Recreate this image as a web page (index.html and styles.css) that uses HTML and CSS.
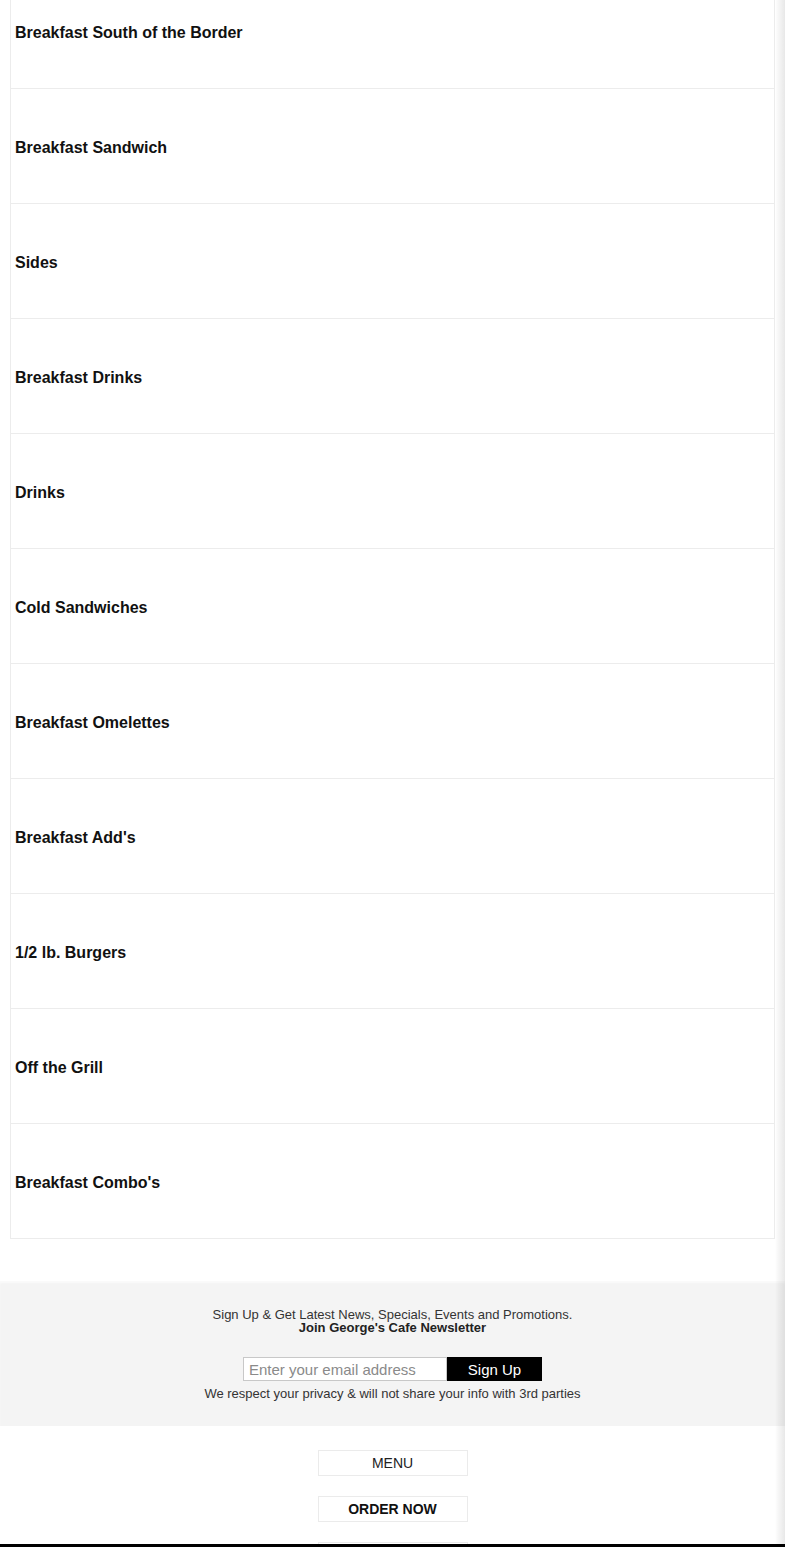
FILE: index.html
```html
<!DOCTYPE html>
<html lang="en">
<head>
<meta charset="utf-8">
<title>George's Cafe Menu</title>
<link rel="stylesheet" href="styles.css">
</head>
<body>
<main class="menu-list">
  <div class="menu-card"><h3>Breakfast South of the Border</h3></div>
  <div class="menu-card"><h3>Breakfast Sandwich</h3></div>
  <div class="menu-card"><h3>Sides</h3></div>
  <div class="menu-card"><h3>Breakfast Drinks</h3></div>
  <div class="menu-card"><h3>Drinks</h3></div>
  <div class="menu-card"><h3>Cold Sandwiches</h3></div>
  <div class="menu-card"><h3>Breakfast Omelettes</h3></div>
  <div class="menu-card"><h3>Breakfast Add's</h3></div>
  <div class="menu-card"><h3>1/2 lb. Burgers</h3></div>
  <div class="menu-card"><h3>Off the Grill</h3></div>
  <div class="menu-card"><h3>Breakfast Combo's</h3></div>
</main>

<section class="newsletter">
  <p class="lead">Sign Up &amp; Get Latest News, Specials, Events and Promotions.<br><strong>Join George's Cafe Newsletter</strong></p>
  <form class="signup">
    <input type="email" placeholder="Enter your email address">
    <button type="button">Sign Up</button>
  </form>
  <p class="privacy">We respect your privacy &amp; will not share your info with 3rd parties</p>
</section>

<nav class="footer-nav">
  <a class="nav-btn" href="#">MENU</a>
  <a class="nav-btn bold" href="#">ORDER NOW</a>
  <a class="nav-btn" href="#">&nbsp;</a>
</nav>
<div class="bottom-bar"></div>
<div class="edge-shadow"></div>
</body>
</html>
```

FILE: styles.css
```css
html, body {
  margin: 0;
  padding: 0;
  background: #fff;
  font-family: "Liberation Sans", Arial, sans-serif;
  color: #111;
}

body {
  height: 1547px;
  overflow: hidden;
  position: relative;
}

.menu-list {
  margin-top: -26px;
  padding: 0 10px;
}

.menu-card {
  box-sizing: border-box;
  height: 115px;
  border: 1px solid #ececec;
  border-top: none;
  display: flex;
  align-items: center;
  padding: 4px 4px 0;
}

.menu-card h3 {
  margin: 0;
  font-size: 16px;
  font-weight: bold;
  color: #111;
}

.newsletter {
  margin-top: 42px;
  background: #f4f4f4;
  padding: 27px 0 24px;
  text-align: center;
  font-size: 13px;
  color: #333;
  box-shadow: inset 0 2px 2px rgba(255,255,255,0.6);
}

.newsletter .lead {
  margin: 0;
  line-height: 13px;
}

.newsletter .lead strong {
  color: #222;
}

.signup {
  margin-top: 23px;
  display: flex;
  justify-content: center;
}

.signup input {
  box-sizing: border-box;
  width: 204px;
  height: 24px;
  margin: 0;
  border: 1px solid #c8c8c8;
  background: #fff;
  padding: 0 5px;
  font-family: "Liberation Sans", Arial, sans-serif;
  font-size: 15px;
  color: #333;
  outline: none;
}

.signup input::placeholder {
  color: #8a8a8a;
}

.signup button {
  box-sizing: border-box;
  width: 95px;
  height: 24px;
  margin: 0;
  border: none;
  background: #000;
  color: #fff;
  font-family: "Liberation Sans", Arial, sans-serif;
  font-size: 15px;
  padding: 0;
}

.privacy {
  margin: 5px 0 0;
  line-height: 16px;
}

.footer-nav {
  margin-top: 24px;
  display: flex;
  flex-direction: column;
  align-items: center;
  gap: 20px;
}

.nav-btn {
  box-sizing: border-box;
  width: 150px;
  height: 26px;
  border: 1px solid #ebebeb;
  display: flex;
  align-items: center;
  justify-content: center;
  font-size: 14px;
  color: #222;
  text-decoration: none;
}

.nav-btn.bold {
  font-weight: bold;
  color: #111;
}

.bottom-bar {
  position: absolute;
  left: 0;
  right: 0;
  bottom: 0;
  height: 3px;
  background: #000;
}

.edge-shadow {
  position: absolute;
  top: 0;
  right: 0;
  bottom: 3px;
  width: 10px;
  background: linear-gradient(to right, rgba(0,0,0,0) 0%, rgba(0,0,0,0.03) 30%, rgba(0,0,0,0.09) 100%);
}
```
